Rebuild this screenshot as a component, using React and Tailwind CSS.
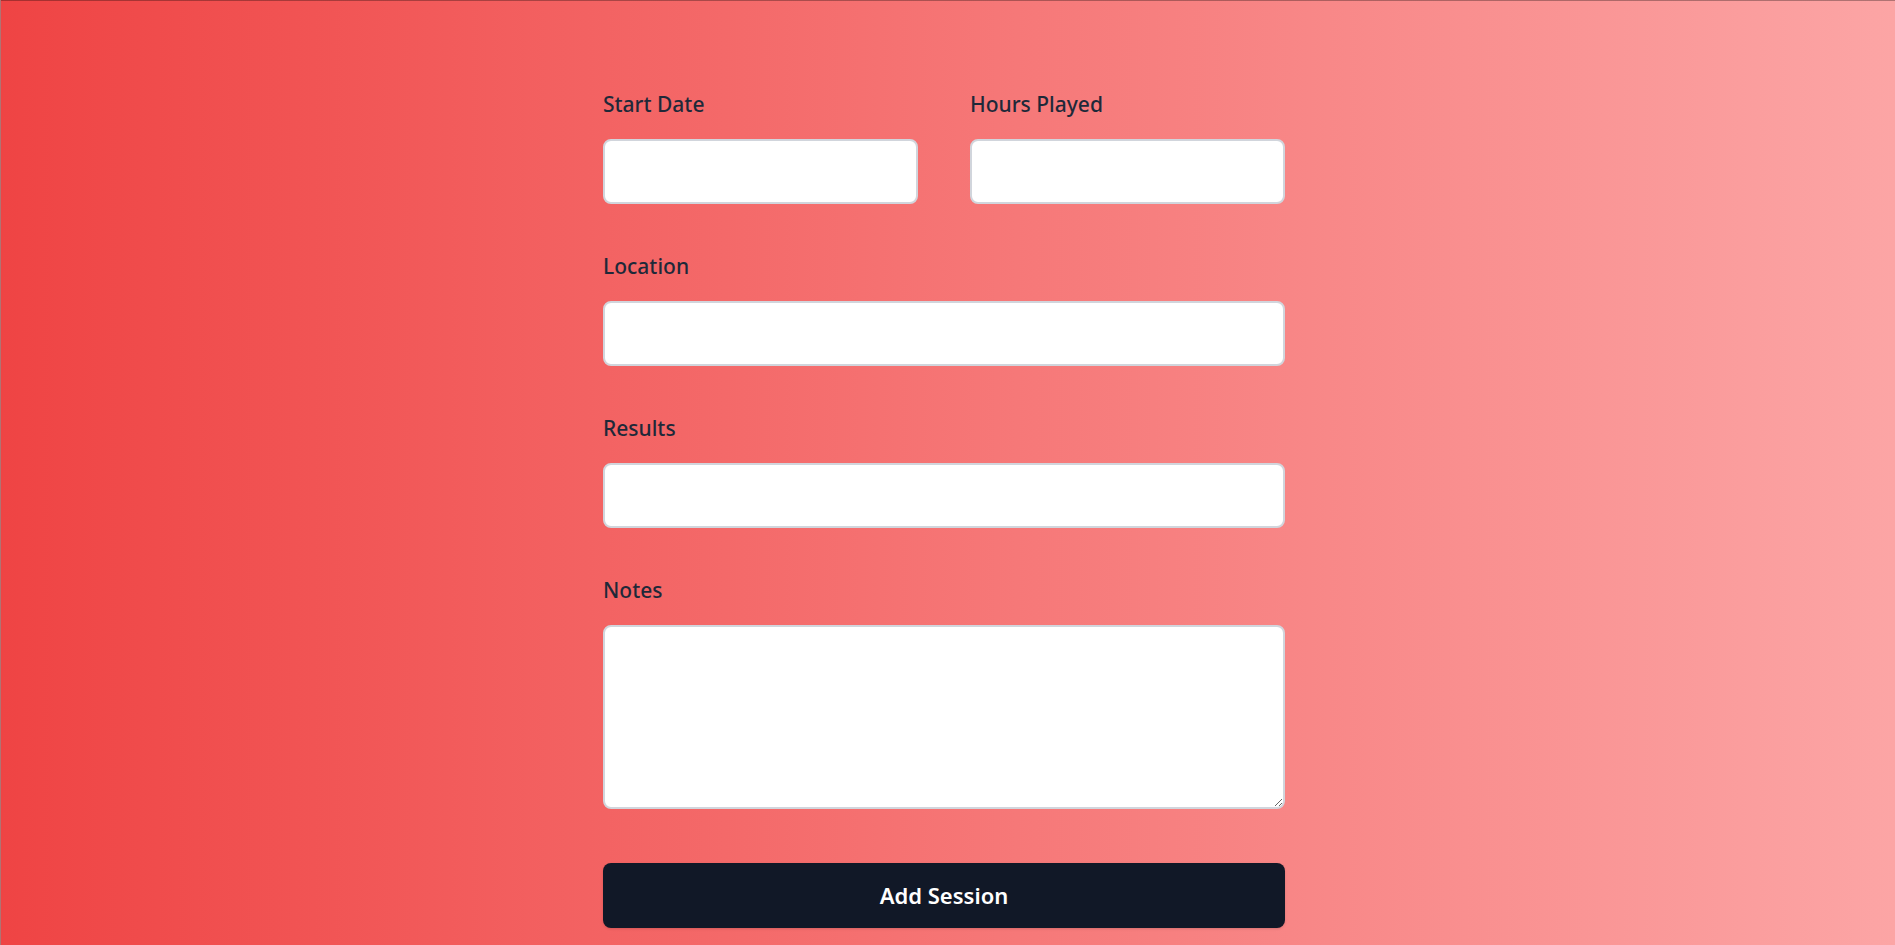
import { useState } from 'react';

function Field({ label, children }) {
  return (
    <div className="flex flex-col">
      <label className="text-[21px] leading-7 font-medium text-gray-800 mb-[21px]">{label}</label>
      {children}
    </div>
  );
}

const inputClass =
  'w-full h-[65px] bg-white border-2 border-gray-300 rounded-lg px-3 text-lg text-gray-800 outline-none';

export default function App() {
  const [form, setForm] = useState({ date: '', hours: '', location: '', results: '', notes: '' });
  const update = (key) => (e) => setForm({ ...form, [key]: e.target.value });

  return (
    <div
      className="min-h-screen bg-[linear-gradient(to_right,#ef4444,#fca5a5)] border-t border-l border-black/30 flex justify-center pr-2"
      style={{ fontFamily: '"Noto Sans", "Open Sans", sans-serif' }}
    >
      <form className="w-[682px] pt-[89px] pb-10 flex flex-col gap-12" onSubmit={(e) => e.preventDefault()}>
        {/* Date + hours */}
        <div className="grid grid-cols-2 gap-[52px]">
          <Field label="Start Date">
            <input className={inputClass} value={form.date} onChange={update('date')} />
          </Field>
          <Field label="Hours Played">
            <input className={inputClass} value={form.hours} onChange={update('hours')} />
          </Field>
        </div>

        <Field label="Location">
          <input className={inputClass} value={form.location} onChange={update('location')} />
        </Field>

        <Field label="Results">
          <input className={inputClass} value={form.results} onChange={update('results')} />
        </Field>

        <Field label="Notes">
          <textarea
            className="w-full h-[184px] bg-white border-2 border-gray-300 rounded-lg px-3 py-2 text-lg text-gray-800 outline-none"
            value={form.notes}
            onChange={update('notes')}
          />
        </Field>

        <button
          type="submit"
          className="mt-[6px] h-[65px] w-full bg-[#111827] text-white text-[22px] font-semibold rounded-lg shadow"
        >
          Add Session
        </button>
      </form>
    </div>
  );
}
